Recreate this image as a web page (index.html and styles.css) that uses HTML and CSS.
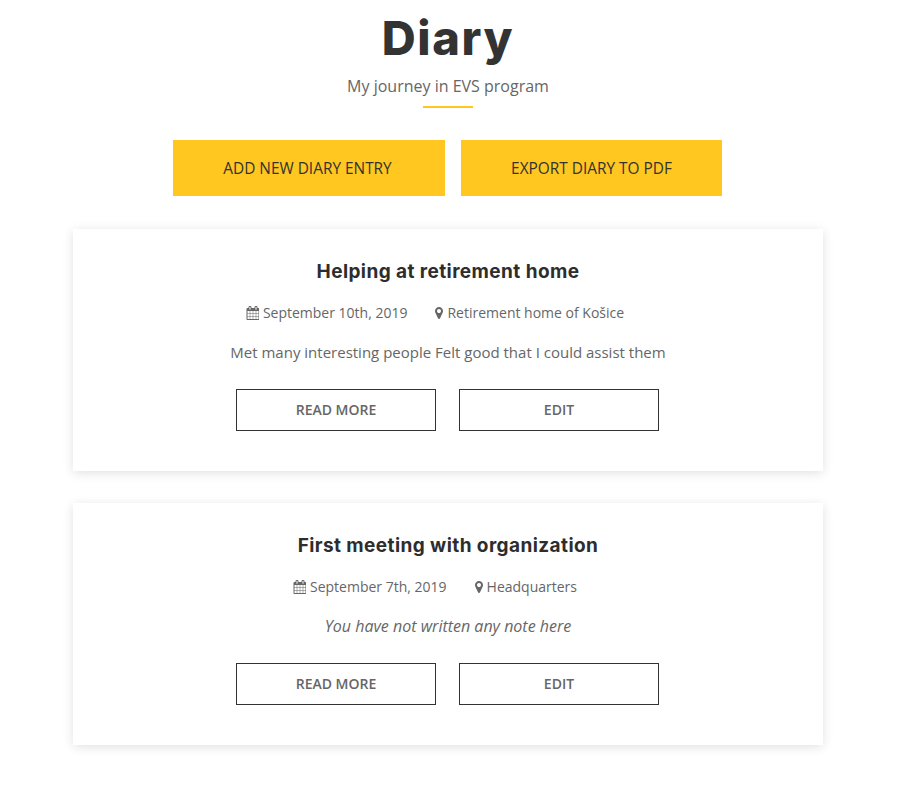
FILE: index.html
```html
<!DOCTYPE html>
<html lang="en">
<head>
<meta charset="utf-8">
<title>Diary</title>
<link rel="stylesheet" href="styles.css">
</head>
<body>
<main class="page">
  <header class="intro">
    <h1 class="intro-title">Diary</h1>
    <p class="intro-sub">My journey in EVS program</p>
    <div class="intro-rule"></div>
  </header>
  <div class="actions">
    <a class="btn-primary btn-add">ADD NEW DIARY ENTRY</a>
    <a class="btn-primary btn-export">EXPORT DIARY TO PDF</a>
  </div>
  <article class="card">
    <h2 class="card-title">Helping at retirement home</h2>
    <div class="meta">
      <span class="meta-item"><svg class="icon-cal" viewBox="0 0 1664 1792"><path d="M192 1664h288v-288h-288v288zm352 0h320v-288h-320v288zm-352-352h288v-320h-288v320zm352 0h320v-320h-320v320zm-352-384h288v-288h-288v288zm736 736h320v-288h-320v288zm-384-736h320v-288h-320v288zm768 736h288v-288h-288v288zm-384-352h320v-320h-320v320zm-352-864v-288q0-13-9.5-22.5t-22.5-9.5h-64q-13 0-22.5 9.5t-9.5 22.5v288q0 13 9.5 22.5t22.5 9.5h64q13 0 22.5-9.5t9.5-22.5zm736 864h288v-320h-288v320zm-384-384h320v-288h-320v288zm384 0h288v-288h-288v288zm32-480v-288q0-13-9.5-22.5t-22.5-9.5h-64q-13 0-22.5 9.5t-9.5 22.5v288q0 13 9.5 22.5t22.5 9.5h64q13 0 22.5-9.5t9.5-22.5zm384-64v1280q0 52-38 90t-90 38h-1408q-52 0-90-38t-38-90v-1280q0-52 38-90t90-38h128v-96q0-66 47-113t113-47h64q66 0 113 47t47 113v96h384v-96q0-66 47-113t113-47h64q66 0 113 47t47 113v96h128q52 0 90 38t38 90z"/></svg>September 10th, 2019</span>
      <span class="meta-item"><svg class="icon-pin" viewBox="0 0 1024 1792"><path d="M768 640q0-106-75-181t-181-75-181 75-75 181 75 181 181 75 181-75 75-181zm256 0q0 109-33 179l-364 774q-16 33-47.5 52t-67.5 19-67.5-19-46.5-52l-365-774q-33-70-33-179 0-212 150-362t362-150 362 150 150 362z"/></svg>Retirement home of Košice</span>
    </div>
    <p class="note">Met many interesting people Felt good that I could assist them</p>
    <div class="card-actions">
      <a class="btn-outline">READ MORE</a>
      <a class="btn-outline">EDIT</a>
    </div>
  </article>
  <article class="card">
    <h2 class="card-title">First meeting with organization</h2>
    <div class="meta">
      <span class="meta-item"><svg class="icon-cal" viewBox="0 0 1664 1792"><path d="M192 1664h288v-288h-288v288zm352 0h320v-288h-320v288zm-352-352h288v-320h-288v320zm352 0h320v-320h-320v320zm-352-384h288v-288h-288v288zm736 736h320v-288h-320v288zm-384-736h320v-288h-320v288zm768 736h288v-288h-288v288zm-384-352h320v-320h-320v320zm-352-864v-288q0-13-9.5-22.5t-22.5-9.5h-64q-13 0-22.5 9.5t-9.5 22.5v288q0 13 9.5 22.5t22.5 9.5h64q13 0 22.5-9.5t9.5-22.5zm736 864h288v-320h-288v320zm-384-384h320v-288h-320v288zm384 0h288v-288h-288v288zm32-480v-288q0-13-9.5-22.5t-22.5-9.5h-64q-13 0-22.5 9.5t-9.5 22.5v288q0 13 9.5 22.5t22.5 9.5h64q13 0 22.5-9.5t9.5-22.5zm384-64v1280q0 52-38 90t-90 38h-1408q-52 0-90-38t-38-90v-1280q0-52 38-90t90-38h128v-96q0-66 47-113t113-47h64q66 0 113 47t47 113v96h384v-96q0-66 47-113t113-47h64q66 0 113 47t47 113v96h128q52 0 90 38t38 90z"/></svg>September 7th, 2019</span>
      <span class="meta-item"><svg class="icon-pin" viewBox="0 0 1024 1792"><path d="M768 640q0-106-75-181t-181-75-181 75-75 181 75 181 181 75 181-75 75-181zm256 0q0 109-33 179l-364 774q-16 33-47.5 52t-67.5 19-67.5-19-46.5-52l-365-774q-33-70-33-179 0-212 150-362t362-150 362 150 150 362z"/></svg>Headquarters</span>
    </div>
    <p class="note note-empty">You have not written any note here</p>
    <div class="card-actions">
      <a class="btn-outline">READ MORE</a>
      <a class="btn-outline">EDIT</a>
    </div>
  </article>
</main>
</body>
</html>
```

FILE: styles.css
```css
* { box-sizing: border-box; }
html, body { margin: 0; padding: 0; background: #fff; }
body { font-family: "Open Sans", "Liberation Sans", sans-serif; color: #666; height: 790px; overflow: hidden; }
.page { width: 896px; padding-top: 8px; display: flex; flex-direction: column; align-items: center; }
.intro { display: flex; flex-direction: column; align-items: center; }
.intro-title { margin: 0; font-family: Inter, "Liberation Sans", sans-serif; font-size: 47px; font-weight: 800; line-height: 60px; letter-spacing: 1.6px; color: #333; }
.intro-sub { margin: 8px 0 0; font-size: 16px; line-height: 20px; color: #666; }
.intro-rule { width: 50px; height: 2px; background: #ffc720; margin-top: 10px; }
.actions { display: flex; gap: 16px; margin: 32px 1px 0 0; }
.btn-primary { display: flex; align-items: center; justify-content: center; height: 56px; background: #ffc720; color: #333; font-size: 15.4px; font-weight: 500; }
.btn-add { width: 272px; padding-right: 3px; }
.btn-export { width: 261px; }
.card { width: 750px; height: 242px; margin-top: 33px; padding-top: 31px; background: #fff; box-shadow: 0 2px 10px rgba(0, 0, 0, 0.12); display: flex; flex-direction: column; align-items: center; }
.card + .card { margin-top: 32px; }
.card-title { margin: 0; font-family: Inter, "Liberation Sans", sans-serif; font-size: 19px; font-weight: 700; line-height: 24px; letter-spacing: 0.42px; color: #2d2d2d; }
.meta { display: flex; gap: 28px; margin: 19px 26px 0 0; font-size: 14px; line-height: 20px; }
.meta-item { display: flex; align-items: center; gap: 4px; }
.icon-cal { width: 13px; height: 14px; fill: #666; }
.icon-pin { width: 8px; height: 14px; fill: #666; }
.note { margin: 19px 0 0; font-size: 15px; line-height: 20px; }
.note-empty { font-size: 16px; font-style: italic; }
.card-actions { display: flex; gap: 23px; margin: 27px 1px 0 0; }
.btn-outline { display: flex; align-items: center; justify-content: center; width: 200px; height: 42px; padding-bottom: 2px; border: 1px solid #333; font-size: 14px; font-weight: 600; color: #666; }
```
